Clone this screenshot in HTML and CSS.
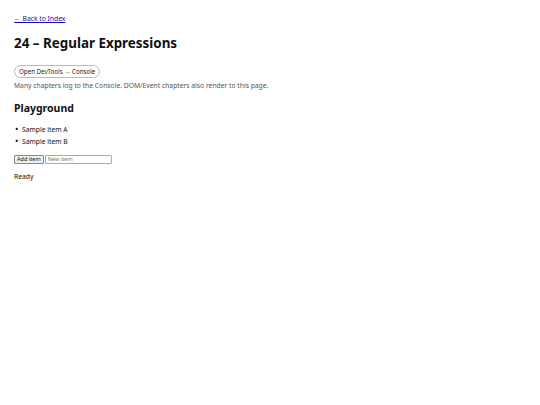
FILE: index.html
```html
<!DOCTYPE html>
<html lang="en">
<head>
    <meta charset="UTF-8">
    <meta name="viewport" content="width=device-width, initial-scale=1.0">
    <title>24 – Regular Expressions</title>
    <link rel="stylesheet" href="styles.css">
</head>
<body>
    <p class="back"><a href="#">← Back to Index</a></p>
    <h1>24 – Regular Expressions</h1>
    <button class="devtools">Open DevTools → Console</button>
    <p class="note">Many chapters log to the Console. DOM/Event chapters also render to this page.</p>

    <section class="playground">
        <h2>Playground</h2>
        <ul id="list">
            <li>Sample item A</li>
            <li>Sample item B</li>
        </ul>
        <div class="row">
            <button id="add">Add item</button>
            <input type="text" id="item" placeholder="New item">
        </div>
        <p id="status">Ready</p>
    </section>
</body>
</html>
```

FILE: styles.css
```css
body {
    margin: 0;
    padding: 12px 14px;
    font-family: "Noto Sans", Arial, sans-serif;
    font-size: 6.75px;
    line-height: 1.5;
    color: #111;
    background: #fff;
}
a {
    color: #1a0dab;
}
.back {
    margin: 2px 0 0;
}
h1 {
    font-size: 13.4px;
    margin: 11px 0 14px;
    line-height: 1.2;
}
.devtools {
    font-family: inherit;
    font-size: 6.2px;
    padding: 1px 4px;
    background: #fff;
    border: 1px solid #bbb;
    border-radius: 999px;
    color: #222;
}
.note {
    color: #555;
    margin: 3px 0 0;
}
h2 {
    font-size: 10.5px;
    margin: 10px 0 7px;
}
ul {
    margin: 0;
    padding-left: 0;
    list-style: none;
}
li {
    line-height: 12px;
}
li::before {
    content: "•";
    display: inline-block;
    width: 7px;
    margin-left: 1px;
    font-size: 9px;
    line-height: 0;
}
.row {
    display: flex;
    gap: 1px;
    margin-top: 7px;
}
.row button {
    font-family: inherit;
    font-size: 5.6px;
    line-height: 1.3;
    padding: 0 2px;
    background: #efefef;
    border: 1px solid #888;
    border-radius: 1px;
    color: #111;
}
.row input {
    font-family: inherit;
    font-size: 5.6px;
    line-height: 1.3;
    width: 61px;
    padding: 0 2px;
    border: 1px solid #aaa;
    border-radius: 1px;
}
#status {
    margin: 8px 0 0;
}
```
